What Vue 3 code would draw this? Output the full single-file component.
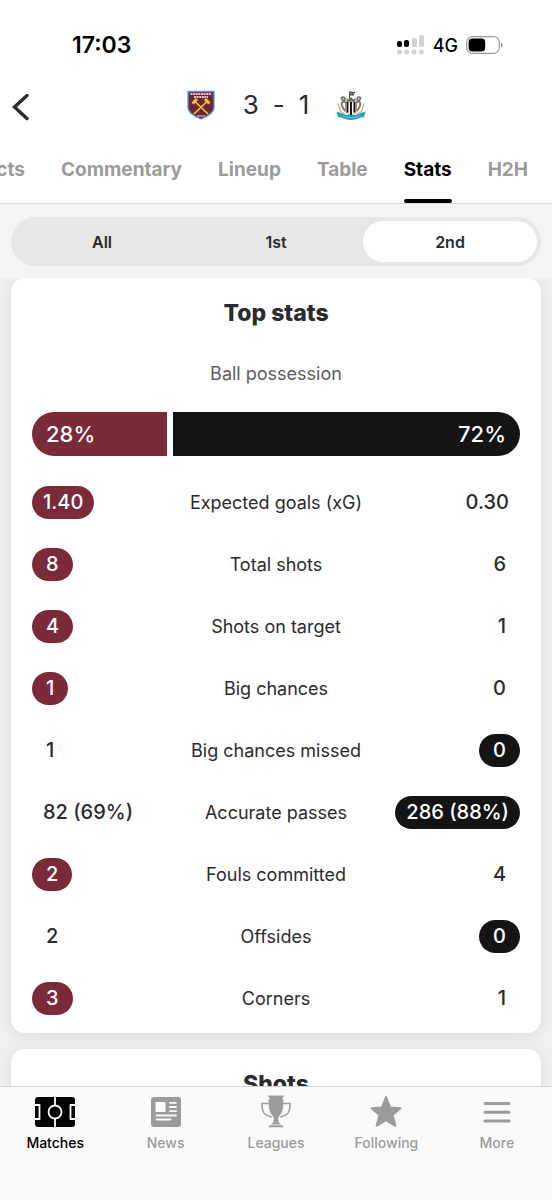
<script setup>
import { ref } from "vue";

const tabs = ["Facts", "Commentary", "Lineup", "Table", "Stats", "H2H"];
const activeTab = ref("Stats");

const periods = ["All", "1st", "2nd"];
const activePeriod = ref("2nd");

const possession = { home: 28, away: 72 };

const stats = [
  { label: "Expected goals (xG)", home: "1.40", away: "0.30", best: "home" },
  { label: "Total shots", home: "8", away: "6", best: "home" },
  { label: "Shots on target", home: "4", away: "1", best: "home" },
  { label: "Big chances", home: "1", away: "0", best: "home" },
  { label: "Big chances missed", home: "1", away: "0", best: "away" },
  { label: "Accurate passes", home: "82 (69%)", away: "286 (88%)", best: "away" },
  { label: "Fouls committed", home: "2", away: "4", best: "home" },
  { label: "Offsides", home: "2", away: "0", best: "away" },
  { label: "Corners", home: "3", away: "1", best: "home" },
];
</script>

<template>
  <div class="app">
    <header class="header">
      <div class="status-bar">
        <span class="time">17:03</span>
        <div class="status-right">
          <svg class="signal" viewBox="0 0 28 20" aria-hidden="true">
            <g fill="#000">
              <rect x="0" y="6" width="5" height="6" rx="2" />
              <rect x="7" y="5" width="5" height="7" rx="2" />
            </g>
            <g fill="#d2d2d2">
              <rect x="15" y="3" width="5" height="9" rx="1.5" />
              <rect x="22" y="0" width="5" height="12" rx="1.5" />
              <circle cx="2.5" cy="17" r="2.5" />
              <circle cx="9.7" cy="17" r="2.5" />
              <circle cx="17" cy="17" r="2.5" />
              <circle cx="24.3" cy="17" r="2.5" />
            </g>
          </svg>
          <span class="network">4G</span>
          <svg class="battery" viewBox="0 0 38 18" aria-hidden="true">
            <rect x="0.7" y="0.7" width="32.6" height="16.6" rx="5.5" fill="none" stroke="#999" stroke-width="1.2" />
            <rect x="2.6" y="2.6" width="16.6" height="12.8" rx="3.6" fill="#000" />
            <path d="M35 6.5c2 .8 2 4.2 0 5z" fill="#888" />
          </svg>
        </div>
      </div>

      <div class="match-bar">
        <button class="back" type="button" aria-label="Back">
          <svg viewBox="0 0 18 28">
            <path d="M15 2.500 2.500 14 15 25.500" fill="none" stroke="#2b2b2b" stroke-width="3.4" stroke-linecap="round" />
          </svg>
        </button>
        <div class="score">
          <svg class="crest" viewBox="0 0 30 32" role="img" aria-label="West Ham United">
            <path d="M2 2.500h26v16c0 5-5.500 8.500-13 11.500C7.500 27 2 23.500 2 18.500z" fill="#6f2438" stroke="#46a3dc" stroke-width="1.3" />
            <path d="M4.500 5h21M8 8h14" stroke="#e0c3cc" stroke-width="1.8" stroke-dasharray="2 .6" />
            <path d="M8.500 12l13.500 13M21.500 12 8 25" stroke="#f3c433" stroke-width="1.7" />
            <path d="M6.500 14.500l4.500-4.500M19 10l4.500 4.500" stroke="#f3c433" stroke-width="3" />
            <path d="M11 27h8" stroke="#dba7b5" stroke-width="1.3" />
          </svg>
          <div class="result">
            <span>3</span>
            <span>-</span>
            <span>1</span>
          </div>
          <svg class="crest" viewBox="0 0 30 32" role="img" aria-label="Newcastle United">
            <path d="M13.500 10V2.500M14 2.800l5 .8-3 1 2 1.400h-4" fill="#a57c58" stroke="#4c4944" stroke-width="1" />
            <path d="M10.500 12.500V9l2 1.500L15 8l2.500 2.500 2-1.500v3.500z" fill="#7a6b59" />
            <path d="M5 9c3-2 5 0 3 3 3 2 2 5 3 8M5 9l2.500 3C4 14 6 18 9 22M25 9c-3-2-5 0-3 3-3 2-2 5-3 8M25 9l-2.500 3c3.500 2 1.500 6-1.500 10" fill="none" stroke="#77736d" stroke-width="1.8" />
            <path d="M2 14.500l2.500 8 5 3M28 14.500l-2.500 8-5 3" fill="none" stroke="#d9a860" stroke-width="1.2" />
            <path d="M9.500 13h11v8c0 3-3 4.500-5.500 5.500-2.500-1-5.500-2.500-5.500-5.500z" fill="#fff" stroke="#9b7646" stroke-width=".8" />
            <path d="M11.500 13v10.500M15 13v13M18.500 13v10.500" stroke="#171717" stroke-width="2" />
            <path d="M.5 22.500 5 24c5 3 15 3 20 0l4.500-1.500L28 28l-3.500.5c-5 3.300-14 3.300-19 0L2 28z" fill="#279dc4" />
            <path d="M7 27c5 2.300 11 2.300 16 0" fill="none" stroke="#77c5dc" stroke-width=".9" />
          </svg>
        </div>
      </div>

      <nav class="tabs">
        <button
          v-for="tab in tabs"
          :key="tab"
          type="button"
          class="tab"
          :class="{ active: tab === activeTab }"
          @click="activeTab = tab"
        >
          {{ tab }}
        </button>
      </nav>
    </header>

    <div class="filter">
      <div class="segments">
        <button
          v-for="period in periods"
          :key="period"
          type="button"
          class="segment"
          :class="{ selected: period === activePeriod }"
          @click="activePeriod = period"
        >
          {{ period }}
        </button>
      </div>
    </div>

    <main class="content">
      <section class="card">
        <h2>Top stats</h2>
        <p class="possession-label">Ball possession</p>
        <div class="possession">
          <div class="bar home" :style="{ flexGrow: possession.home }">
            <span>{{ possession.home }}%</span>
          </div>
          <div class="bar away" :style="{ flexGrow: possession.away }">
            <span>{{ possession.away }}%</span>
          </div>
        </div>
        <table class="stats">
          <tbody>
            <tr v-for="stat in stats" :key="stat.label">
              <td class="left">
                <span class="value" :class="{ home: stat.best === 'home', single: stat.home.length === 1 }">{{ stat.home }}</span>
              </td>
              <th scope="row">{{ stat.label }}</th>
              <td class="right">
                <span class="value" :class="{ away: stat.best === 'away', single: stat.away.length === 1 }">{{ stat.away }}</span>
              </td>
            </tr>
          </tbody>
        </table>
      </section>
      <section class="card">
        <h2>Shots</h2>
      </section>
    </main>

    <nav class="bottom-nav">
      <a href="#" class="current">
        <svg viewBox="0 0 42 34">
          <rect x="1" y="2" width="40" height="30" rx="3" fill="#000" />
          <g fill="none" stroke="#fafafa" stroke-width="1.8">
            <path d="M21 2v8.500M21 23.500V32M1 10h4.500v14H1M41 10h-4.500v14H41" />
            <circle cx="21" cy="17" r="6.500" />
          </g>
        </svg>
        <span>Matches</span>
      </a>
      <a href="#">
        <svg viewBox="0 0 42 34">
          <rect x="6" y="2" width="30" height="30" rx="3" fill="#9b9b9b" />
          <path d="M10.500 7h10v10h-10z" fill="#fafafa" />
          <path d="M25 7.800h6M25 12h6M25 16.200h6M11.500 20.500h19.500M11.500 24.500h14" fill="none" stroke="#fafafa" stroke-width="1.8" stroke-linecap="round" />
        </svg>
        <span>News</span>
      </a>
      <a href="#">
        <svg viewBox="0 0 42 34">
          <path d="M13.200.5h15.600c0 1.500-.8 2-1.600 2.500.2 1 1.200 1.300 1.200 2.500 0 4-.2 8-1.400 11.200-1.200 3.300-3.800 4.500-3.800 7.300 0 2.500.8 4 2.500 5.500h-9.400c1.700-1.500 2.500-3 2.500-5.500 0-2.800-2.600-4-3.800-7.300-1.200-3.200-1.400-7.200-1.400-11.200 0-1.200 1-1.500 1.200-2.500-.8-.5-1.600-1-1.600-2.500z" fill="#9b9b9b" />
          <path d="M14 8.500H7c0 3.500.2 6.500 1.500 9 1.300 2.300 4.500 3.300 8 4.500M28 8.500h7c0 3.500-.2 6.500-1.500 9-1.300 2.300-4.500 3.300-8 4.500" fill="none" stroke="#9b9b9b" stroke-width="1.5" />
          <path d="M13.500 32.300c0-1.300.8-2 2-2h11c1.200 0 2 .7 2 2z" fill="#9b9b9b" />
        </svg>
        <span>Leagues</span>
      </a>
      <a href="#">
        <svg viewBox="0 0 42 34">
          <path d="M21 2l4.200 10.500 10.300.7-8 6.900 2.900 10.700L21 25.200l-9.400 5.600 2.900-10.700-8-6.900 10.300-.7z" fill="#9b9b9b" stroke="#9b9b9b" stroke-width="2" stroke-linejoin="round" />
        </svg>
        <span>Following</span>
      </a>
      <a href="#">
        <svg viewBox="0 0 42 34">
          <path d="M9 8.500h24M9 17.300h24M9 26h24" stroke="#9b9b9b" stroke-width="3" stroke-linecap="round" />
        </svg>
        <span>More</span>
      </a>
    </nav>
  </div>
</template>

<style>
body {
  margin: 0;
  background: #f0f0f0;
}
</style>

<style scoped>
.app {
  height: 100vh;
  display: flex;
  flex-direction: column;
  font-family: Inter, "Liberation Sans", sans-serif;
  color: #2b2b2b;
}
button {
  border: 0;
  padding: 0;
  background: none;
  color: inherit;
  font-family: inherit;
  cursor: pointer;
}
.header {
  background: #fff;
  border-bottom: 1px solid #dedede;
}
.status-bar {
  display: flex;
  align-items: center;
  justify-content: space-between;
  height: 54px;
  padding: 18px 48px 0 72px;
}
.time {
  font-size: 23px;
  font-weight: 600;
  color: #000;
}
.status-right {
  display: flex;
  align-items: center;
  gap: 8px;
}
.signal {
  width: 28px;
  height: 20px;
}
.network {
  font-size: 18px;
  font-weight: 500;
  color: #000;
}
.battery {
  width: 38px;
  height: 18px;
}
.match-bar {
  display: grid;
  grid-template-columns: 40px 1fr 40px;
  align-items: center;
  height: 66px;
}
.back {
  display: flex;
  height: 44px;
  padding: 4px 0 0 12px;
  align-items: center;
}
.back svg {
  width: 18px;
  height: 28px;
}
.score {
  display: flex;
  align-items: center;
  justify-content: center;
  gap: 27px;
}
.crest {
  width: 30px;
  height: 32px;
}
.result {
  display: flex;
  gap: 14px;
  font-size: 26px;
  line-height: 32px;
}
.tabs {
  display: flex;
  justify-content: flex-end;
  gap: 36px;
  height: 65px;
  padding-right: 24px;
  overflow: hidden;
}
.tab {
  flex: none;
  display: flex;
  flex-direction: column;
  justify-content: space-between;
  padding-top: 20px;
  font-size: 19px;
  line-height: 24px;
  font-weight: 700;
  color: #9b9b9b;
}
.tab::after {
  content: "";
  width: 100%;
  height: 4px;
  border-radius: 2px;
}
.tab.active {
  color: #000;
}
.tab.active::after {
  background: #000;
}
.filter {
  padding: 13px 11px 12px;
  background: #f4f4f4;
}
.segments {
  display: flex;
  padding: 4px;
  border-radius: 25px;
  background: #e7e7e7;
}
.segment {
  flex: 1;
  height: 41px;
  border-radius: 21px;
  font-size: 16px;
  font-weight: 600;
}
.segment.selected {
  background: #fff;
}
.content {
  flex: 1;
  min-height: 0;
  overflow: hidden;
  padding: 0 11px;
  background: #f0f0f0;
}
.card {
  margin-bottom: 16px;
  padding: 19px 21px 4px;
  border-radius: 14px;
  background: #fff;
  box-shadow: 0 2px 16px rgba(0, 0, 0, 0.09);
}
h2 {
  margin: 0;
  font-size: 23px;
  line-height: 32px;
  font-weight: 800;
  text-align: center;
}
.possession-label {
  margin: 33px 0 26px;
  font-size: 18px;
  line-height: 24px;
  text-align: center;
  color: #5c5c5c;
}
.possession {
  display: flex;
  gap: 6px;
  margin-bottom: 15px;
}
.bar {
  flex-basis: 0;
  height: 44px;
  font-size: 22px;
  line-height: 44px;
  font-weight: 500;
}
.bar span {
  margin: 0 14px;
}
.bar.home {
  border-radius: 22px 0 0 22px;
}
.bar.away {
  border-radius: 0 22px 22px 0;
  text-align: right;
}
.home {
  background: #7b2a3a;
  color: #fff;
}
.away {
  background: #141414;
  color: #fff;
}
.stats {
  width: 100%;
  table-layout: fixed;
  border-collapse: collapse;
}
.stats tr {
  height: 62px;
}
.stats th,
.stats td {
  padding: 0;
}
.stats th {
  width: 40%;
  font-size: 18px;
  font-weight: 400;
}
.left {
  text-align: left;
}
.right {
  text-align: right;
}
.value {
  display: inline-block;
  padding: 0 11px;
  border-radius: 17px;
  font-size: 20px;
  line-height: 33px;
  font-weight: 500;
  white-space: nowrap;
}
.value.single {
  padding: 0 14px;
}
.bottom-nav {
  display: flex;
  height: 113px;
  border-top: 1px solid #d4d4d4;
  background: #fafafa;
}
.bottom-nav a {
  flex: 1;
  display: flex;
  flex-direction: column;
  align-items: center;
  gap: 5px;
  padding-top: 8px;
  font-size: 14px;
  line-height: 18px;
  font-weight: 500;
  color: #9b9b9b;
  text-decoration: none;
}
.bottom-nav svg {
  width: 42px;
  height: 34px;
}
.bottom-nav .current {
  color: #000;
}
</style>
